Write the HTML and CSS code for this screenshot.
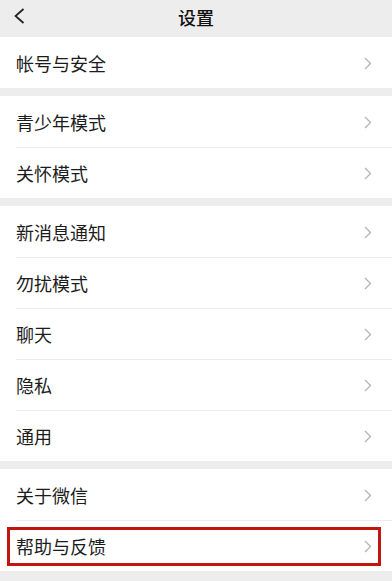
FILE: index.html
```html
<!DOCTYPE html>
<html lang="zh">
<head>
<meta charset="utf-8">
<link rel="stylesheet" href="styles.css">
</head>
<body>
<div class="page">
  <header class="topbar">
    <svg class="back" width="12" height="16" viewBox="0 0 12 16"><path d="M10.5 1 L2.5 8 L10.5 15" fill="none" stroke="#1f1f1f" stroke-width="1.7" stroke-linejoin="miter"/></svg>
    <div class="title">设置</div>
  </header>

  <section class="group">
    <div class="row"><span class="label">帐号与安全</span><svg class="chev" width="8" height="13" viewBox="0 0 8 13"><path d="M1 1 L6.5 6.5 L1 12" fill="none" stroke="#b3b3b3" stroke-width="1.3"/></svg></div>
  </section>

  <section class="group">
    <div class="row"><span class="label">青少年模式</span><svg class="chev" width="8" height="13" viewBox="0 0 8 13"><path d="M1 1 L6.5 6.5 L1 12" fill="none" stroke="#b3b3b3" stroke-width="1.3"/></svg></div>
    <div class="row"><span class="label">关怀模式</span><svg class="chev" width="8" height="13" viewBox="0 0 8 13"><path d="M1 1 L6.5 6.5 L1 12" fill="none" stroke="#b3b3b3" stroke-width="1.3"/></svg></div>
  </section>

  <section class="group">
    <div class="row"><span class="label">新消息通知</span><svg class="chev" width="8" height="13" viewBox="0 0 8 13"><path d="M1 1 L6.5 6.5 L1 12" fill="none" stroke="#b3b3b3" stroke-width="1.3"/></svg></div>
    <div class="row"><span class="label">勿扰模式</span><svg class="chev" width="8" height="13" viewBox="0 0 8 13"><path d="M1 1 L6.5 6.5 L1 12" fill="none" stroke="#b3b3b3" stroke-width="1.3"/></svg></div>
    <div class="row"><span class="label">聊天</span><svg class="chev" width="8" height="13" viewBox="0 0 8 13"><path d="M1 1 L6.5 6.5 L1 12" fill="none" stroke="#b3b3b3" stroke-width="1.3"/></svg></div>
    <div class="row"><span class="label">隐私</span><svg class="chev" width="8" height="13" viewBox="0 0 8 13"><path d="M1 1 L6.5 6.5 L1 12" fill="none" stroke="#b3b3b3" stroke-width="1.3"/></svg></div>
    <div class="row"><span class="label">通用</span><svg class="chev" width="8" height="13" viewBox="0 0 8 13"><path d="M1 1 L6.5 6.5 L1 12" fill="none" stroke="#b3b3b3" stroke-width="1.3"/></svg></div>
  </section>

  <section class="group">
    <div class="row"><span class="label">关于微信</span><svg class="chev" width="8" height="13" viewBox="0 0 8 13"><path d="M1 1 L6.5 6.5 L1 12" fill="none" stroke="#b3b3b3" stroke-width="1.3"/></svg></div>
    <div class="row highlighted"><span class="label">帮助与反馈</span><svg class="chev" width="8" height="13" viewBox="0 0 8 13"><path d="M1 1 L6.5 6.5 L1 12" fill="none" stroke="#b3b3b3" stroke-width="1.3"/></svg><span class="mark"></span></div>
  </section>
</div>
</body>
</html>
```

FILE: styles.css
```css
* { box-sizing: border-box; }
html, body {
  margin: 0;
  padding: 0;
  background: #ededed;
}
body {
  font-family: "Noto Sans CJK SC", "Noto Sans", sans-serif;
  color: #1a1a1a;
}
.page {
  width: 392px;
  height: 581px;
  overflow: hidden;
  background: #ededed;
  display: flex;
  flex-direction: column;
  gap: 8px;
}
.topbar {
  height: 37px;
  margin-bottom: -8px;
  position: relative;
  display: flex;
  align-items: center;
  justify-content: center;
}
.back {
  position: absolute;
  left: 13px;
  top: 8px;
}
.title {
  font-size: 18px;
  font-weight: 500;
  line-height: 1;
  margin-top: -3px;
  color: #111;
}
.group {
  background: #fff;
  display: flex;
  flex-direction: column;
}
.row {
  position: relative;
  height: 51px;
  display: flex;
  align-items: center;
  justify-content: space-between;
  padding: 0 20px 0 16px;
}
.row + .row::before {
  content: "";
  position: absolute;
  left: 16px;
  right: 0;
  top: 0;
  height: 1px;
  background: #ececec;
}
.label {
  font-size: 18px;
  line-height: 1;
  color: #1c1c1c;
  margin-top: 1px;
}
.chev { display: block; margin-top: 1px; }
.mark {
  position: absolute;
  left: 7px;
  right: 11px;
  top: 7px;
  bottom: 5px;
  border: 3px solid #c0160f;
}
```
